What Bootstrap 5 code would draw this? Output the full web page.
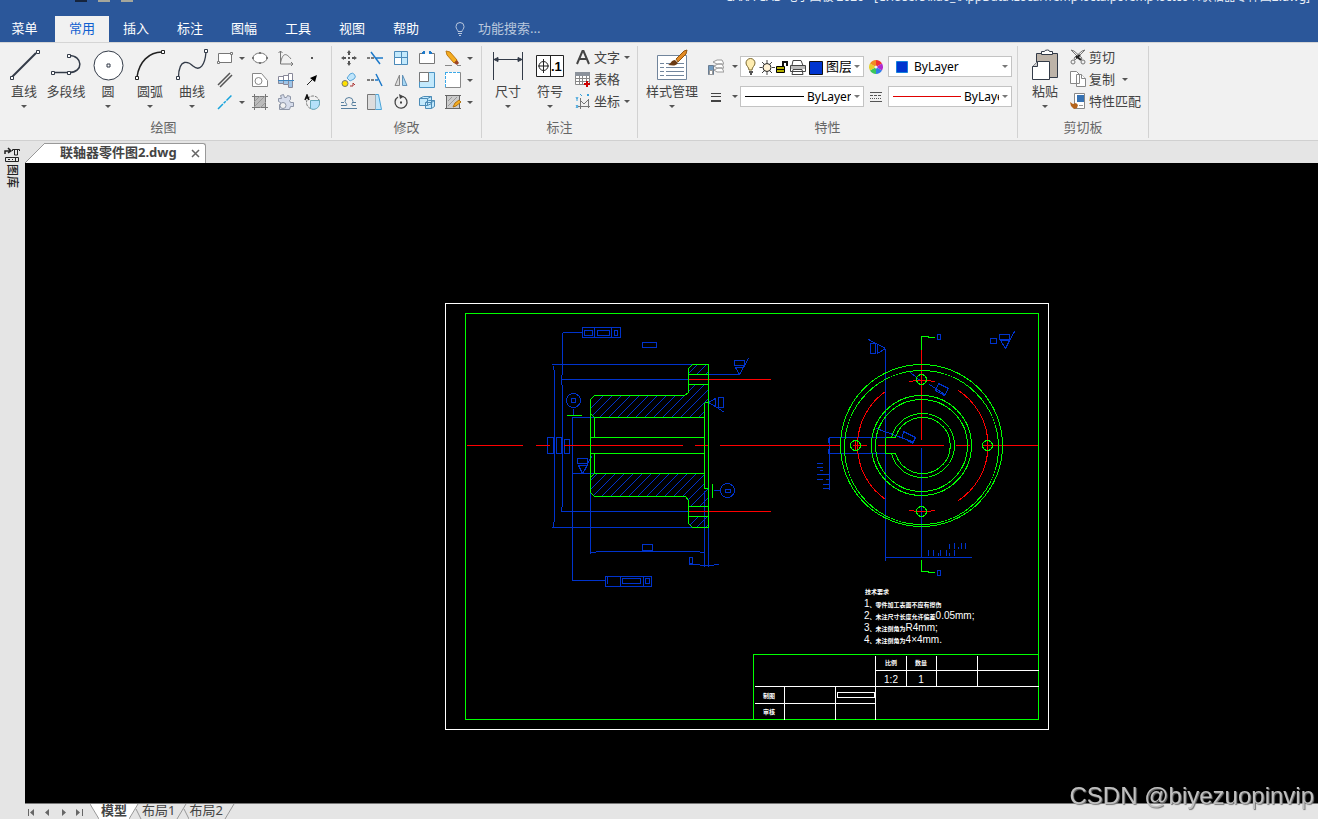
<!DOCTYPE html>
<html lang="zh-CN">
<head>
<meta charset="utf-8">
<meta name="viewport" content="width=device-width, initial-scale=1">
<title>CAXA CAD 电子图板 2020</title>
<link rel="stylesheet" href="https://cdn.jsdelivr.net/npm/bootstrap@5.3.0/dist/css/bootstrap.min.css">
<style>
body{font-family:"Noto Sans","Noto Sans CJK SC",sans-serif;font-size:13px;line-height:18px;color:#444;background:#e5e5e5}
button,select,input{font:inherit;color:inherit;background:none;border:0;padding:0}
.titlebar{height:16px;background:#2b579a;color:#e8eef7;font-size:12px}
.titlebar .caption{margin-top:-12px;padding-right:8px}
.quick{margin-left:75px;gap:11px}
.quick span{width:12px;height:2px;background:#16243c}
.quick span+span{background:#a5a69b}
.tabs{height:26px;background:#2b579a;color:#fff}
.tabs .tab{width:54px;height:26px;text-align:center;text-decoration:none;color:#fff;line-height:24px}
.tabs .tab.first{width:49px;margin-right:6px}
.tabs .tab.active{background:#f1f1f1;color:#0f5fd0}
.tabs .finder{color:#b9c7dd;width:160px;margin-bottom:3px}
.tabs .bulb{margin:0 11px 0 20px}
.finder::placeholder{color:#b9c7dd;opacity:1}
.ribbon{background:#f1f1f1;border-top:1px solid #d5d5d5;border-bottom:1px solid #d0d0d0;height:99px}
.panel{border-right:1px solid #d2d2d2;margin:3px 0;height:92px;flex:none}
.panel .tools{height:72px}
.panel .title{color:#666;text-align:center;padding-right:4px}
.g1{width:332px}.g2{width:150px}.g3{width:156px}.g4{width:380px}.g5{width:131px}
.g1 .tools,.g4 .tools{padding-left:3px}.g2 .tools{padding-left:4px}.g3 .tools{padding-left:5px}.g5 .tools{padding-left:6px}
.big{width:42px;padding-top:3px;white-space:nowrap}
.big.wide{width:62px}
.big svg{display:block;margin:0 auto 1px}
.big .label{height:18px}
.caret{display:block;width:0;height:0;border:3px solid transparent;border-top:3px solid #555;border-bottom:0}
.big .caret{margin:5px auto 0}
.small-grid{display:grid;grid-auto-rows:22px;padding-top:1px;align-content:start;align-items:center;justify-items:center}
.small-grid button{line-height:0}
.draw-grid{grid-template-columns:24px 10px 26px 26px 26px}
.edit-grid{grid-template-columns:26px 26px 26px 26px 26px 8px}
.cmd{height:22px;gap:3px;white-space:nowrap}
.cmd .caret{margin-left:1px}
.props{display:grid;grid-template-columns:26px 11px 124px 24px 124px;grid-auto-rows:21px;row-gap:9px;padding-top:10px;align-content:start;align-items:center;justify-items:center}
.combo{width:124px;height:21px;background:#fff;border:1px solid #c3c3c3;padding:0 3px 0 4px;color:#000;font-size:12px}
.combo select{appearance:none;flex:1 1 0;min-width:0;outline:0;text-overflow:clip;overflow:hidden}
.combo .layer-name{font-size:13px;margin-bottom:2px}
.combo .caret{border-top-color:#777;margin-left:3px}
.side{width:25px;flex:none;padding:5px 0 0 4px}
.side button{writing-mode:vertical-rl;text-orientation:sideways;font-size:12px;font-weight:500;line-height:16px;width:16px;color:#222}
.doctabs{height:22px}
.doctab{background:#fff;border-top:1px solid #999;border-right:1px solid #999;border-radius:0 3px 0 0;height:20px;width:161px;padding-left:15px;font-weight:700;line-height:17px}
.close-x{margin-left:auto;margin-right:5px;line-height:0}
.canvas{background:#000}
.canvas svg{width:100%;height:100%;display:block}
.sheets{height:16px;border-top:1px solid #777}
.sheets button{line-height:13px;height:15px;padding-bottom:2px}
.sheets .on{background:#fff;font-weight:700;width:30px}
.watermark{right:4px;bottom:7px;font-family:"Liberation Sans",sans-serif;font-size:24px;line-height:32px;color:#c0c0c0;text-shadow:1px 1px 1px #777;pointer-events:none}
.note{font-family:"Liberation Sans","Noto Sans CJK SC",sans-serif;font-size:10px;fill:#fff}
.note .cn{font-size:6px;font-weight:700}
</style>
</head>
<body class="vh-100 d-flex flex-column overflow-hidden">
<header>
  <div class="titlebar d-flex justify-content-between overflow-hidden">
    <div class="quick d-flex"><span></span><span></span><span></span></div>
    <div class="caption text-nowrap">CAXA CAD 电子图板 2020 - [C:\Users\liao_\AppData\Local\Temp\octalpcTemp\octc64\联轴器零件图2.dwg]</div>
  </div>
  <nav class="tabs d-flex align-items-center">
    <a class="tab first" href="#">菜单</a><a class="tab active" href="#">常用</a><a class="tab" href="#">插入</a><a class="tab" href="#">标注</a><a class="tab" href="#">图幅</a><a class="tab" href="#">工具</a><a class="tab" href="#">视图</a><a class="tab" href="#">帮助</a>
    <label for="find" class="bulb lh-1"><svg width="14" height="14" fill="none" stroke="#b9c7dd"><path d="M5 9.500C5 8 3 7 3 4.500a4 4 0 0 1 8 0C11 7 9 8 9 9.500zM5 11.500h4M6 13.500h2"/></svg></label>
    <input id="find" class="finder" placeholder="功能搜索..." aria-label="功能搜索">
  </nav>
</header>

<div class="ribbon d-flex">
  <section class="panel g1">
    <div class="tools d-flex align-items-start">
      <button class="big"><svg width="32" height="32" fill="#fff" stroke="#333b48"><path stroke-width="2" d="M4 28L28 4"/><path d="M2.500 27.500h3v3h-3zM28.500 1.500h3v3h-3z"/></svg><div class="label">直线</div><span class="caret"></span></button>
      <button class="big"><svg width="32" height="32" fill="#fff" stroke="#333b48"><path fill="none" stroke-width="1.500" d="M3 23.500h16c15 0 14-17 0-17"/><path d="M1.500 22.500h3v3h-3zM17.500 22.500h3v3h-3zM17.500 5.500h3v3h-3z"/></svg><div class="label">多段线</div></button>
      <button class="big"><svg width="32" height="32" fill="#fff" stroke="#333b48"><circle cx="16.500" cy="16.500" r="14.500"/><path d="M15 15h3v3h-3z"/></svg><div class="label">圆</div><span class="caret"></span></button>
      <button class="big"><svg width="32" height="32" fill="#fff" stroke="#222"><path fill="none" stroke-width="1.500" d="M3 28C5 13 15 3 28 3"/><path d="M1.500 27.500h3v3h-3zM27.500 1.500h3v3h-3z"/></svg><div class="label">圆弧</div><span class="caret"></span></button>
      <button class="big"><svg width="32" height="32" fill="#fff" stroke="#333b48"><path fill="none" stroke-width="1.300" d="M2.500 28C3 8 13 13 17 17c7 6 12-1 13-14"/><path d="M.5 27.500h3v3h-3zM28.500.5h3v3h-3z"/></svg><div class="label">曲线</div><span class="caret"></span></button>
      <div class="small-grid draw-grid">
        <button aria-label="矩形"><svg width="16" height="16" fill="#fff" stroke="#777"><path d="M1.500 3.500h13v9h-13z"/><path d="M.5 11.500h2v2h-2zM13.500 2.500h2v2h-2z"/></svg></button><span class="caret"></span>
        <button aria-label="椭圆"><svg width="16" height="16" fill="#fff" stroke="#777"><ellipse cx="8" cy="8" rx="7" ry="5"/><path stroke-width="2" d="M0 8h2M14 8h2M7 3h2M7 13h2"/></svg></button>
        <button aria-label="公式曲线"><svg width="16" height="16" fill="none" stroke="#777"><path d="M2.500 1v13h12M.5 3l2-2 2 2M13 12l2 2-2 2M2.500 13C5 1 9 4 13 9"/></svg></button>
        <button aria-label="点"><svg width="16" height="16"><path fill="#555" d="M7 7h2v2H7z"/></svg></button>
        <button aria-label="平行线"><svg width="16" height="16" stroke="#555" stroke-width="1.500"><path d="M1 13L13 1M3 15L15 3"/></svg></button><span></span>
        <button aria-label="局部放大"><svg width="16" height="16" fill="#fff" stroke="#888"><path d="M.5 1.500h9l6 7v6H.5z"/><circle cx="6.500" cy="9" r="3.500"/></svg></button>
        <button aria-label="轴"><svg width="16" height="16"><path fill="#fff" d="M0 4h6V3h4V1h5v7H0z"/><path fill="#9fc5e8" d="M0 9h15v6h-4v-2H6v-1H0z"/><path fill="none" stroke="#889" d="M.5 4.500h5v-1h5v-2h4v14h-4v-3h-5v-1h-5zM5.500 4v8M10.500 2v10"/><path stroke="#3c84bd" d="M0 8.500h16"/></svg></button>
        <button aria-label="箭头"><svg width="16" height="16"><path stroke="#222" d="M3 13l5-5"/><path d="M13 3l-2 7-5-4z"/></svg></button>
        <button aria-label="中心线"><svg width="16" height="16" stroke="#16a3dc" stroke-width="1.500"><path stroke-dasharray="7 1 3 1" d="M1 15L15 1"/></svg></button><span class="caret"></span>
        <button aria-label="剖面线"><svg width="16" height="16" stroke="#777"><path fill="#bbb" d="M2.500 2.500h11v11h-11zM0 2.500h16M0 13.500h16M2.500 0v16M13.500 0v16"/><path d="M2 8l6-6M2 13L13 2M8 14l6-6" stroke="#999"/></svg></button>
        <button aria-label="齿轮"><svg width="16" height="16" fill="#d6dceb" stroke="#8d95a6"><path d="M2.500 1.500l3-1 1 3h2l1-2 3 1v3l-1 1 1 2h3v4h-3l-1 3h-10v-5h1v-2l-2-1v-3h3z"/><circle cx="5" cy="11.500" r="3" fill="#f1f1f1"/></svg></button>
        <button aria-label="填充"><svg width="16" height="16" fill="none"><circle cx="9" cy="8.500" r="6.500" stroke="#777" stroke-dasharray="3 1"/><path fill="#b5e2fa" stroke="#6ab" d="M6.500 6.500h9v3a6 6 0 0 1-9 5z"/><path stroke="#111" stroke-width="1.500" d="M1 6l2-5 2 5M2 4h3"/></svg></button>
      </div>
    </div>
    <div class="title">绘图</div>
  </section>

  <section class="panel g2">
    <div class="tools">
      <div class="small-grid edit-grid">
        <button aria-label="平移"><svg width="16" height="16" fill="#555"><path d="M8 0l2 3H9v2H7V3H6zM8 16l2-3H9v-2H7v2H6zM0 8l3-2v1h2v2H3v1zM16 8l-3-2v1h-2v2h2v1zM7 7h2v2H7z"/></svg></button>
        <button aria-label="裁剪"><svg width="16" height="16"><path stroke="#555" stroke-dasharray="3 1" stroke-width="1.500" d="M0 8h8"/><path stroke="#1d79c9" stroke-width="1.500" d="M4 2l9 12M9 8h7"/></svg></button>
        <button aria-label="阵列"><svg width="16" height="16" fill="#c3e9fc" stroke="#4b8ab9"><path d="M1.500 1.500h13v13h-13zM8.500 1v14M1 7.500h14"/><path fill="#fff" d="M1.500 7.500h7v7h-7z"/></svg></button>
        <button aria-label="打断"><svg width="16" height="16" fill="#fff" stroke="#777"><path d="M5 3.500H.5v10h15v-10H11"/><path stroke="#1d79c9" stroke-width="2" d="M3 3h3M10 3h3M5 1v3M11 1v3"/></svg></button>
        <button aria-label="删除"><svg width="16" height="16"><path fill="#f5ad20" stroke="#bd7912" d="M1 1l4 1 7 8-3 3-7-8z"/><path fill="#9b4526" d="M9 13l3-3 2 3-2 2z"/><path stroke="#888" d="M0 15.500h7M12 15.500h4"/></svg></button><span class="caret"></span>
        <button aria-label="复制图形"><svg width="16" height="16"><path fill="#bfe5fb" stroke="#59a5d8" d="M6 6l3-4a3 3 0 0 1 4 5l-4 2z"/><circle cx="4" cy="11.500" r="3" fill="#ffe100" stroke="#777"/><path fill="none" stroke="#a33" d="M9 14h3v-3l2 2"/></svg></button>
        <button aria-label="延伸"><svg width="16" height="16"><path stroke="#555" stroke-dasharray="3 1" stroke-width="1.500" d="M0 8h8"/><path stroke="#1d79c9" stroke-width="1.500" d="M8 8h3M9 2l6 12"/></svg></button>
        <button aria-label="镜像"><svg width="16" height="16"><path fill="#ddd" stroke="#888" d="M6.500 3v10.500H2z"/><path fill="#a9d8f4" stroke="#6292b8" d="M9.500 3v10.500h4.500z"/></svg></button>
        <button aria-label="缩放"><svg width="16" height="16" fill="#c3e9fc" stroke="#4b94c4"><path d="M.5.5h15v15H.5z"/><path fill="#fff" stroke="#777" d="M.5.5h9v9h-9z"/></svg></button>
        <button aria-label="分解"><svg width="16" height="16"><path fill="#fff" stroke="#888" d="M.5.5h15v15H.5z"/><path stroke="#fff" stroke-width="2" d="M0 1h15M1 0v15"/><path stroke="#3da9e8" stroke-width="1" stroke-dasharray="3 1" d="M0 .5h16M.5 0v16"/></svg></button><span class="caret"></span>
        <button aria-label="等距线"><svg width="16" height="16" fill="none" stroke="#59809f"><path d="M0 11.500h5c2 0 0-2-1-4a4 4 0 0 1 8 0c-1 2-2 4 0 4h3M0 14.500h16M0 8.500h3M11 8.500h4"/></svg></button>
        <button aria-label="拉伸"><svg width="16" height="16"><path fill="#ddd" stroke="#777" d="M.5.5h8v15h-8z"/><path fill="#bfe5fb" stroke="#4ba4d8" d="M8.500.5h3l3 15h-6"/></svg></button>
        <button aria-label="旋转"><svg width="16" height="16" fill="none" stroke="#444"><path stroke-width="1.300" d="M10 2.500A6 6 0 1 1 5 3"/><path fill="#444" stroke="none" d="M6 0l5 2.500L7 5zM7 7.500h2v2H7z"/></svg></button>
        <button aria-label="块"><svg width="16" height="16" fill="#c3e9fc" stroke="#4c8cb7"><path d="M.5 4.500l4-2h8v7l-4 2h-8zM.5 4.500h8v7M8.500 4.500l4-2M6.500 8.500l3-2h6v6l-3 2h-6zM6.500 8.500h6v6M12.500 8.500l3-2"/></svg></button>
        <button aria-label="编辑填充"><svg width="16" height="16"><path fill="#ccc" stroke="#666" d="M1.500 1.500h13v13h-13zM0 1.500h16M0 14.500h16"/><path stroke="#999" d="M3 12l9-9M3 7l4-4"/><path fill="#f5ad20" stroke="#b0720f" d="M14 6l2 2-5 4-3 1 2-4z"/></svg></button><span class="caret"></span>
      </div>
    </div>
    <div class="title pe-0">修改</div>
  </section>

  <section class="panel g3">
    <div class="tools d-flex align-items-start">
      <button class="big"><svg width="32" height="32" stroke="#333b48"><path d="M1.500 3v28M30.500 3v28M2 10.500h28"/><path fill="#333b48" d="M2 10.500l4-2v4zM30 10.500l-4-2v4z"/></svg><div class="label">尺寸</div><span class="caret"></span></button>
      <button class="big"><svg width="32" height="32" fill="#fff" stroke="#222"><path d="M2.500 6.500h27v21h-27zM16.500 6v22"/><circle cx="9.500" cy="17" r="4.500"/><path d="M4 17h11M9.500 10v14"/><text x="17" y="22" font-size="13" font-weight="700" font-family="Liberation Sans,sans-serif" fill="#000" stroke="none">.1</text></svg><div class="label">符号</div><span class="caret"></span></button>
      <div class="ms-1">
        <button class="cmd d-flex align-items-center"><svg width="16" height="16" fill="none" stroke="#444" stroke-width="2"><path d="M2 15L7.500 2h1L14 15M4 10h8"/></svg>文字<span class="caret"></span></button>
        <button class="cmd d-flex align-items-center"><svg width="16" height="16"><path fill="#fff" stroke="#888" d="M.5 1.500h14v12H.5zM0 7.500h15M0 10.500h15M4.500 4v10M7.500 4v10M11.500 4v10"/><path fill="#8b929b" d="M0 1h15v4H0z"/><path stroke="#c00" stroke-width="2" d="M9 13h6M12 10v6"/></svg>表格</button>
        <button class="cmd d-flex align-items-center"><svg width="16" height="16" fill="none" stroke="#777"><path d="M5.500 5v11M3 13.500h12M6 8l3 3 5-5M13.500 6v9"/><path stroke="#37a0db" d="M1 4l1 2 1-2M2 6v2M1 12l2 3M3 12l-2 3M5 1l2 2M12 1l2 2M14 1l-2 2"/></svg>坐标<span class="caret"></span></button>
      </div>
    </div>
    <div class="title pe-0">标注</div>
  </section>

  <section class="panel g4">
    <div class="tools d-flex align-items-start">
      <button class="big wide"><svg width="32" height="32"><path fill="#fff" stroke="#71859c" d="M1.500 6.500h29v24h-29z"/><path stroke="#71859c" d="M4 14.500h4M4 18.500h4M4 22.500h4M4 26.500h4M10 14.500h18M10 18.500h18M10 22.500h18M10 26.500h18"/><path fill="#6b3b13" d="M12 16c3-1 3-5 7-5l3 3c-3 4-7 2-10 2z"/><path fill="#e28a24" stroke="#915510" d="M20 10l8-8 3-1-1 4-8 8z"/></svg><div class="label">样式管理</div><span class="caret"></span></button>
      <div class="props">
        <button class="lh-1" aria-label="图层工具"><svg width="16" height="16" fill="#fff" stroke="#999"><path d="M5 3l4-2h5l2 4h-7zM6 7l4-2h4l2 4H9zM6 11l4-2h4l2 4H9z"/><path fill="#729bc0" stroke="#6b7d91" d="M.5 6.500h5v9h-5z"/><path fill="#fff" d="M1.500 11.500h3v4h-3z"/></svg></button><span class="caret"></span>
        <div class="combo d-flex align-items-center">
          <svg width="81" height="18" class="flex-shrink-0"><path fill="#ffedb0" stroke="#7a6831" d="M4 12c0-3-3-4-3-7a4.500 4.500 0 0 1 9 0c0 3-3 4-3 7z"/><path stroke="#555" stroke-width="2" d="M4 14h4M5 16h2"/><circle cx="22" cy="9.500" r="4" fill="#fff2d5" stroke="#222"/><path stroke="#444" d="M22 2v3M22 14v3M14.500 9.500h3M27 9.500h3M17 4l2 2M27 4l-2 2M17 15l2-2M27 15l-2-2"/><path fill="none" stroke="#111" stroke-width="2" d="M38 9V4h4v4"/><path fill="#b5b000" stroke="#000" d="M31.500 8.500h8v6h-8zM31 11.500h9"/><path fill="#fff" stroke="#444" d="M48 2.500h8l2 5H47zM45.500 7.500h15v6h-15zM48 11.500h9l1 5H47z"/><path fill="#bbb" d="M46 8h14v3H46z"/><path fill="#0035cf" stroke="#111" d="M64.500 3.500h13v13h-13z"/></svg>
          <select class="layer-name" aria-label="图层"><option>图层</option></select><span class="caret"></span>
        </div>
        <svg width="14" height="14"><path fill="#e33" d="M7 7V0a7 7 0 0 1 6 3.500z"/><path fill="#b02ad0" d="M7 7l6-3.500a7 7 0 0 1 0 7z"/><path fill="#317bea" d="M7 7l6 3.500A7 7 0 0 1 7 14z"/><path fill="#3bc65c" d="M7 7v7a7 7 0 0 1-6-3.500z"/><path fill="#e4d12a" d="M7 7l-6 3.500a7 7 0 0 1 0-7z"/><path fill="#f28b22" d="M7 7L1 3.500A7 7 0 0 1 7 0z"/><circle cx="7" cy="7" r="1.500" fill="#eee"/></svg>
        <div class="combo d-flex align-items-center"><svg width="21" height="14" class="flex-shrink-0"><path fill="#0035cf" stroke="#1683dc" d="M3.500 1.500h11v11h-11z"/></svg><select aria-label="颜色"><option>ByLayer</option></select><span class="caret"></span></div>
        <button class="lh-1" aria-label="线宽设置"><svg width="12" height="12" stroke="#444"><path d="M1 2.500h10M1 5.500h10"/><path stroke-width="2" d="M1 10h10"/></svg></button><span class="caret"></span>
        <div class="combo d-flex align-items-center"><svg width="62" height="3" class="flex-shrink-0"><path stroke="#000" d="M0 1.500h59"/></svg><select aria-label="线宽"><option>ByLayer</option></select><span class="caret"></span></div>
        <svg width="12" height="12" stroke="#555"><path d="M0 1.500h12M0 10.500h12"/><path stroke-dasharray="3 1" d="M0 4.500h12"/><path stroke-dasharray="1 1" d="M0 7.500h12"/></svg>
        <div class="combo d-flex align-items-center"><svg width="71" height="3" class="flex-shrink-0"><path stroke="#e00000" d="M0 1.500h68"/></svg><select aria-label="线型"><option>ByLayer</option></select><span class="caret"></span></div>
      </div>
    </div>
    <div class="title pe-0">特性</div>
  </section>

  <section class="panel g5">
    <div class="tools d-flex align-items-start">
      <button class="big"><svg width="32" height="32" stroke="#333b48"><path fill="#bdb3a8" d="M7.500 4.500h21v24h-21z"/><path fill="#fff" d="M12.500 5.500v-3h3q0-1.500 3-1.500 2 0 2 1.500h3v3zM3.500 17.500l5-5h12v18h-17z"/><path fill="#ccc" d="M3.500 17.500h5v-5"/></svg><div class="label">粘贴</div><span class="caret"></span></button>
      <div class="ms-1">
        <button class="cmd d-flex align-items-center"><svg width="16" height="16" fill="none" stroke="#777"><path fill="#eee" d="M1 1l10 10 1-2-8-7zM15 1L5 11 4 9l8-7z"/><path stroke="#222" stroke-width="2" d="M6 9l4-3M6 7l5 4"/><circle cx="3" cy="13" r="2"/><circle cx="13" cy="13" r="2"/></svg>剪切</button>
        <button class="cmd d-flex align-items-center"><svg width="16" height="16" fill="#fff" stroke="#888"><path d="M.5.5h6l3 3v9h-9zM6.500 3.500h5l4 4v8h-9z"/><path d="M11.500 3.500v4h4"/></svg>复制<span class="caret ms-1"></span></button>
        <button class="cmd d-flex align-items-center"><svg width="16" height="16"><path fill="#fff" stroke="#888" d="M4.500.5h10v15h-10z"/><path fill="#3672b4" d="M7 2h7v7H7z"/><path stroke="#999" d="M9 12.500h4"/><path fill="#b5641c" d="M0 9l3 2 3-1 2 2-1 3-3 1-3-3z"/></svg>特性匹配</button>
      </div>
    </div>
    <div class="title pe-0">剪切板</div>
  </section>
</div>

<main class="d-flex flex-grow-1 overflow-hidden">
  <aside class="side"><button class="d-flex align-items-center"><svg width="16" height="18" fill="none" stroke="#222"><path stroke-width="1.500" d="M1 8V5h5M4 2l3 3-3 2"/><path d="M8.500 5V3.500h7V5M10.500 4v5h3V4M1.500 11.500h13v4h-13zM4 13.500h2M8 13.500h1M11.500 12v3"/></svg>图库</button></aside>
  <div class="d-flex flex-column flex-grow-1 overflow-hidden">
    <div class="doctabs d-flex align-items-end">
      <svg width="20" height="20"><path fill="#fff" d="M0 20L20 0v20z"/><path stroke="#999" d="M0 20L20 0"/></svg>
      <div class="doctab d-flex">联轴器零件图2.dwg<button class="close-x" aria-label="关闭"><svg width="9" height="9" stroke="#666" stroke-width="1.500"><path d="M1 1l7 7M8 1L1 8"/></svg></button></div>
    </div>
    <div class="canvas flex-grow-1 overflow-hidden">
      <svg viewBox="25 163 1293 640" fill="none">
        <defs>
          <clipPath id="section"><path d="M692 364h16v10h-20v-6zM594 395h90l4-3v-8h20v18h-4v15H594l-4-4v-14zM594 473h110v15h4v18h-20v-6l-3-4h-91l-4-4v-15zM688 516h20v11h-16l-4-4z"/></clipPath>
        </defs>
        <g transform="translate(.5 .5)" shape-rendering="crispEdges" stroke-width="1">
          <!-- hatching -->
          <g clip-path="url(#section)" stroke="#0033cc"><path d="M616 364l-163 163m172-163l-163 163m172-163l-163 163m172-163l-163 163m172-163l-163 163m172-163l-163 163m172-163l-163 163m172-163l-163 163m172-163l-163 163m172-163l-163 163m172-163l-163 163m172-163l-163 163m172-163l-163 163m172-163l-163 163m172-163l-163 163m172-163l-163 163m172-163l-163 163m172-163l-163 163m172-163l-163 163m172-163l-163 163m172-163l-163 163m172-163l-163 163m172-163l-163 163m172-163l-163 163m172-163l-163 163m172-163l-163 163m172-163l-163 163m172-163l-163 163m172-163l-163 163"/></g>
          <!-- dimensions -->
          <g stroke="#0033cc">
            <path d="M551 364h141M560 379h128M553 365v4l1 1v151l-1 1v5M562 332v42l-1 1v9l1 1v121l-1 1v4M562 332h20M560 511h128M551 527h141"/>
            <path d="M582 327h38v10h-38zM594 327v10M611 327v10M584 330h8v5h-8zM597 330h12v5h-12zM614 330h3v5h-3zM642 342h14v5h-14z"/>
            <path d="M708 374h31l-4-7h8l-4 7 9-16M734 360h10v5h-10zM708 402l7-4v8zM715 406l9 6M718 397h5v10h-5z"/>
            <circle cx="573" cy="400" r="7"/><path d="M571 398h4v4h-4zM573 408v7M571 417h23M572 417v163h33"/>
            <path d="M605 576h46v10h-46zM607 576v7M620 576v10M643 576v10M622 578h18v5h-18zM645 578h4v5h-4z"/>
            <path d="M547 437h6v16h-6zM556 437h5v16h-5zM564 439h5v14h-5z"/>
            <path d="M577 458h10v5h-10zM571 473h23M582 473l-4-8h9zl9-17"/>
            <circle cx="727" cy="490" r="7"/><path d="M725 489h5v3h-5zM713 490h7"/>
            <path d="M590 492v61M590 552h5l1-1h103l1 1h4M704 490v76M708 527v39M642 544h10v6h-10zM689 557h3v6h-3zM688 564h11l1 1h13l1-1h4"/>
            <path d="M885 348v212M885 557h86M921 447v110M885 348l-17-9M885 348l-8 5v-10M870 343h5v10h-5zM828 437h56M828 453h56M829 437v52M828 437v5M828 448v5"/>
            <path d="M910 372l12 10M929 384l17 11M938 383l10 5-4 7-9-5zM876 428l38 14M903 431l12 6-3 6-10-6z"/>
            <path d="M937 334h3v5h-3zM937 570h3v5h-3zM990 338h6v5h-6zM999 334h10v5h-10zM1000 340h9l-4 8zM1005 348l9-17"/>
            <path d="M816 463h6M816 467h6M819 470h3M816 474h12M816 479h6M825 479h3M822 484h6M822 488h6M928 549v6M933 549v6M938 552v3M940 549v6M946 549v6M949 552v3M954 549v6M949 543v5M954 542v6M958 546v2M961 542v6M965 542v6"/>
          </g>
          <!-- centre lines -->
          <g stroke="#ff0000">
            <path d="M466 445h56M535 445h14M563 445h119M694 445h14M719 445h121M852 445h14M877 445h66M955 445h14M981 445h57M687 379h83M687 511h83M921 349v90M909 381l8-1h9l9 1M909 510l8 1h9l9-1M855 440v10M987 440v10"/>
            <path d="M885 391A66 66 0 0 0 885 499M958 390A66 66 0 0 1 958 500"/>
          </g>
          <!-- part outlines -->
          <g stroke="#00ff00">
            <path d="M692 364h16v163h-16l-4-4v-23l-3-4h-91l-4-4v-93l4-4h90l4-3v-24zM688 374h20M688 384h20M688 506h20M688 516h20M590 413l4 4h110M590 437h114M590 453h114M590 477l4-4h110M594 417v20M594 453v20M704 402v86M704 402h4M704 488h4M566 415h15M712 483v14"/>
            <circle cx="921" cy="445" r="81"/><circle cx="921" cy="447" r="77"/><circle cx="921" cy="445" r="50"/><circle cx="921" cy="445" r="46"/>
            <path d="M891 437A32 32 0 1 1 891 453M895 437A28 28 0 1 1 895 453M885 437h10M885 453h10M885 437v16"/>
            <circle cx="855" cy="445" r="5"/><circle cx="987" cy="445" r="5"/><circle cx="921" cy="379" r="5"/><circle cx="921" cy="511" r="5"/>
            <path d="M921 349v-13h7v1h6M921 559v12h7v1h6M465 313h573v406H465zM753 719v-65h285"/>
          </g>
          <!-- sheet frame and title block -->
          <path stroke="#fff" d="M445 303h603v426H445zM875 655v64M875 670h163M754 686h284M906 655v31M936 655v31M977 655v31M784 686v33M835 686v33M754 703h121M837 692h37v5h-37z"/>
        </g>
        <g class="note">
          <text class="cn" x="865" y="594">技术要求</text>
          <text x="864" y="607">1<tspan class="cn">、零件加工表面不应有擦伤</tspan></text>
          <text x="864" y="619">2<tspan class="cn">、未注尺寸长度允许偏差</tspan>0.05mm;</text>
          <text x="864" y="631">3<tspan class="cn">、未注倒角为</tspan>R4mm;</text>
          <text x="864" y="643">4<tspan class="cn">、未注倒角为</tspan>4×4mm.</text>
          <g text-anchor="middle">
            <text class="cn" x="891" y="665">比例</text><text class="cn" x="921" y="665">数量</text>
            <text x="891" y="683">1:2</text><text x="921" y="683">1</text>
            <text class="cn" x="769" y="698">制图</text><text class="cn" x="769" y="714">审核</text>
          </g>
        </g>
      </svg>
    </div>
    <div class="sheets d-flex">
      <svg width="65" height="15" fill="#666"><path d="M3 5h1v7H3zM9 5v7L5 8.500zM24 5v7l-4-3.500zM37 5v7l4-3.500zM51 5v7l4-3.500zM57 5h1v7h-1z"/></svg>
      <svg width="9" height="15"><path fill="#fff" d="M0 0h9v15z"/><path stroke="#999" d="M0 0l9 15"/></svg>
      <button class="on">模型</button>
      <svg width="13" height="15"><path fill="#fff" d="M0 0h9L0 15z"/><path stroke="#999" d="M9 0L0 15M7 5l5 10"/></svg>
      <button>布局1</button>
      <svg width="14" height="15"><path stroke="#999" d="M11 0L2 15M9 5l5 10"/></svg>
      <button>布局2</button>
      <svg width="14" height="15"><path stroke="#999" d="M11 0L2 15"/></svg>
    </div>
  </div>
</main>
<div class="watermark position-fixed">CSDN @biyezuopinvip</div>
<script src="https://cdn.jsdelivr.net/npm/bootstrap@5.3.0/dist/js/bootstrap.bundle.min.js"></script>
</body>
</html>
